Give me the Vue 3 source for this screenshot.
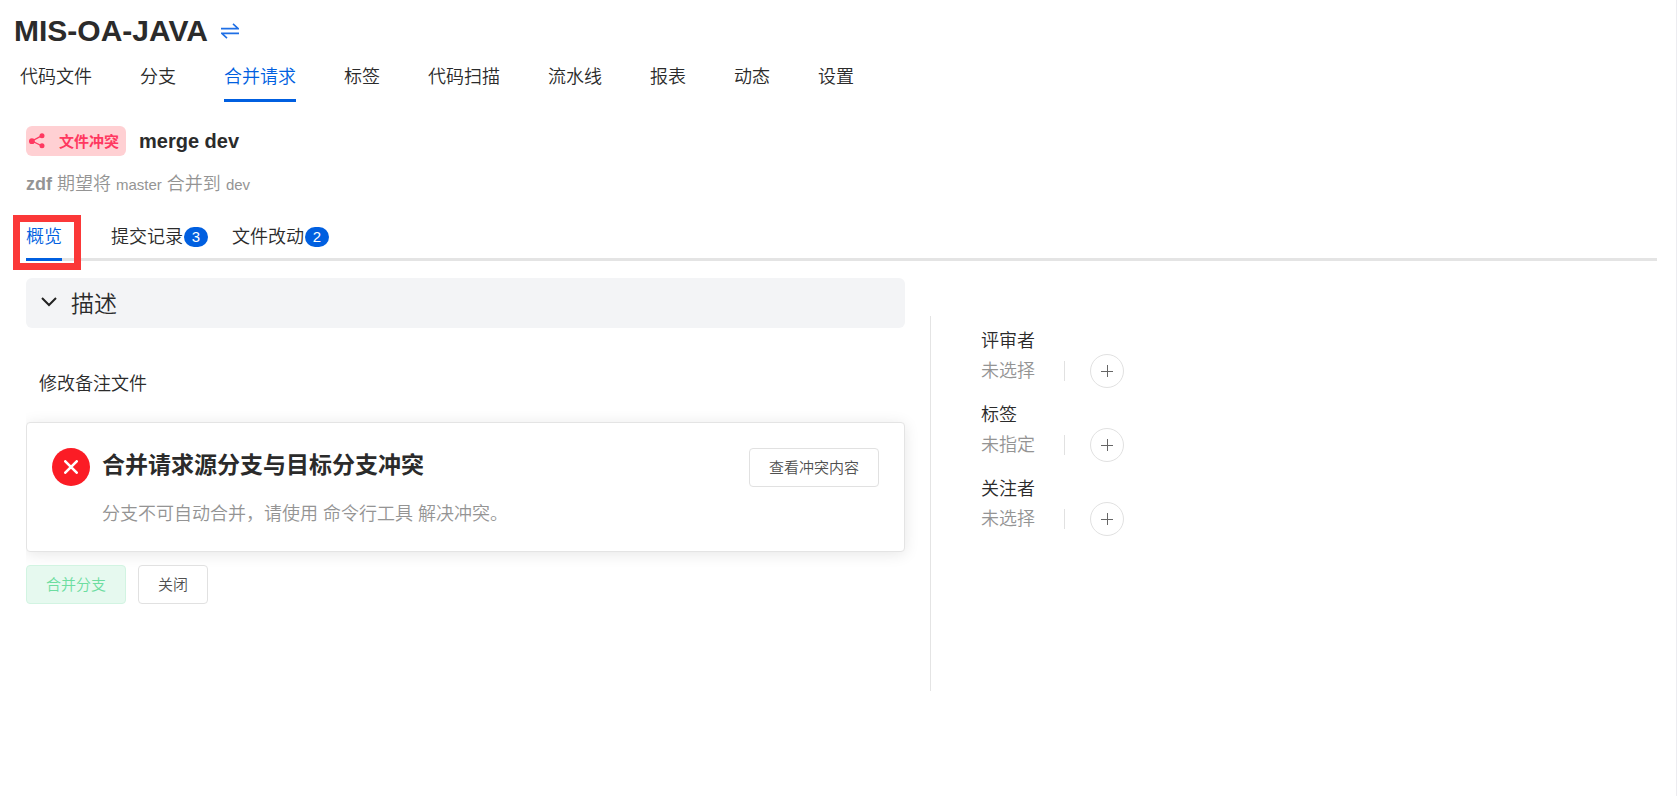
<template>
  <div class="repo-page">
    <header class="repo-header">
      <h1 class="repo-name">MIS-OA-JAVA</h1>
      <button class="switch-btn" type="button" aria-label="切换">
        <svg width="18" height="16" viewBox="0 0 18 16" fill="none" stroke="#1f6fe5" stroke-width="1.6">
          <path d="M0 5.6h17.2L12 .9" />
          <path d="M18 10.4H.8L6 15.1" />
        </svg>
      </button>
    </header>

    <nav class="repo-nav">
      <a
        v-for="item in navs"
        :key="item"
        href="#"
        class="nav-item"
        :class="{ active: item === activeNav }"
        @click.prevent="activeNav = item"
        >{{ item }}</a
      >
    </nav>

    <main class="merge-request">
      <div class="mr-title">
        <span class="conflict-tag">
          <svg width="16" height="16" viewBox="0 0 16 16" fill="#ff3860">
            <path d="M13 2.6L3 8l10 5" fill="none" stroke="#ff3860" stroke-width="1.3" />
            <circle cx="13" cy="2.7" r="2.5" />
            <circle cx="2.9" cy="8.2" r="2.9" />
            <circle cx="13" cy="12.8" r="2.5" />
          </svg>
          <span>文件冲突</span>
        </span>
        <h2>merge dev</h2>
      </div>
      <p class="mr-info"><strong>zdf</strong> 期望将 <small>master</small> 合并到 <small>dev</small></p>

      <div class="mr-tabs">
        <a
          v-for="tab in tabs"
          :key="tab.name"
          href="#"
          class="tab-item"
          :class="{ active: tab.name === activeTab }"
          @click.prevent="activeTab = tab.name"
          >{{ tab.name }}<span v-if="tab.count" class="badge">{{ tab.count }}</span></a
        >
        <div class="mark"></div>
      </div>

      <div class="mr-body">
        <section class="mr-content">
          <button class="desc-header" type="button" @click="showDesc = !showDesc">
            <svg width="16" height="10" viewBox="0 0 16 10" fill="none" stroke="#222" stroke-width="2">
              <path d="M1 1l7 7 7-7" />
            </svg>
            描述
          </button>
          <p v-show="showDesc" class="desc-text">修改备注文件</p>

          <div class="conflict-card">
            <span class="error-icon">
              <svg width="14" height="14" viewBox="0 0 14 14" fill="none" stroke="#fff" stroke-width="2.6" stroke-linecap="round">
                <path d="M1.3 1.3l11.4 11.4M12.7 1.3L1.3 12.7" />
              </svg>
            </span>
            <div class="card-text">
              <h3>合并请求源分支与目标分支冲突</h3>
              <p>分支不可自动合并，请使用 命令行工具 解决冲突。</p>
            </div>
            <button class="btn" type="button">查看冲突内容</button>
          </div>

          <div class="actions">
            <button class="btn btn-merge" type="button" disabled>合并分支</button>
            <button class="btn" type="button">关闭</button>
          </div>
        </section>

        <aside class="mr-side">
          <div v-for="item in sides" :key="item.label" class="side-item">
            <div class="side-label">{{ item.label }}</div>
            <div class="side-value">
              <span>{{ item.value }}</span>
              <i class="divider"></i>
              <button class="add-btn" type="button" :aria-label="item.label">
                <svg width="12" height="12" viewBox="0 0 12 12" stroke="#666" stroke-width="1">
                  <path d="M0 6.5h12M6.5 0v12" />
                </svg>
              </button>
            </div>
          </div>
        </aside>
      </div>
    </main>
  </div>
</template>

<script setup>
import { ref } from "vue";

const navs = ["代码文件", "分支", "合并请求", "标签", "代码扫描", "流水线", "报表", "动态", "设置"];
const activeNav = ref("合并请求");

const tabs = [
  { name: "概览" },
  { name: "提交记录", count: 3 },
  { name: "文件改动", count: 2 },
];
const activeTab = ref("概览");

const showDesc = ref(true);

const sides = [
  { label: "评审者", value: "未选择" },
  { label: "标签", value: "未指定" },
  { label: "关注者", value: "未选择" },
];
</script>

<style>
body {
  margin: 0;
  background: #fff;
}
</style>

<style scoped>
.repo-page {
  box-sizing: border-box;
  min-height: 100vh;
  border-right: 1px solid #ececf0;
  font-family: "Liberation Sans", "Noto Sans CJK SC", sans-serif;
  font-size: 18px;
  font-weight: 350;
  line-height: 24px;
  color: #2b2b2b;
}

h1,
h2,
h3,
p {
  margin: 0;
}

strong {
  font-weight: bold;
}

a {
  color: inherit;
  text-decoration: none;
}

button {
  font-family: inherit;
  font-weight: inherit;
  cursor: pointer;
}

svg {
  display: block;
}

.repo-header {
  display: flex;
  align-items: center;
  gap: 13px;
  padding: 12px 0 0 14px;
}

.repo-name {
  font-size: 30px;
  line-height: 38px;
}

.switch-btn {
  padding: 0;
  border: none;
  background: none;
}

.repo-nav {
  display: flex;
  gap: 48px;
  padding: 15px 20px 0;
}

.nav-item {
  padding-bottom: 10px;
  border-bottom: 3px solid transparent;
}

.nav-item.active {
  color: #005fe0;
  border-color: #005fe0;
}

.merge-request {
  padding: 24px 19px 24px 26px;
}

.mr-title {
  display: flex;
  align-items: center;
  gap: 13px;
}

.mr-title h2 {
  font-size: 20px;
}

.conflict-tag {
  display: flex;
  align-items: center;
  gap: 14px;
  height: 30px;
  padding: 0 7px 0 3px;
  border-radius: 6px;
  background: #ffd0d3;
  color: #ff3860;
  font-size: 15px;
  font-weight: bold;
}

.conflict-tag span {
  padding-top: 2px;
}

.mr-info {
  margin-top: 16px;
  color: #949494;
}

.mr-info small {
  font-size: 15px;
}

.mr-tabs {
  position: relative;
  display: flex;
  align-items: flex-start;
  gap: 24px;
  margin-top: 28px;
  border-bottom: 3px solid #e4e4e4;
}

.tab-item {
  display: flex;
  align-items: center;
  padding-bottom: 9px;
  margin-bottom: -3px;
  border-bottom: 3px solid transparent;
}

.tab-item.active {
  margin-right: 25px;
  border-color: #005fe0;
  color: #005fe0;
}

.badge {
  min-width: 24px;
  margin-left: 1px;
  border-radius: 10px;
  background: #005fe0;
  color: #fff;
  font-size: 15px;
  line-height: 20px;
  text-align: center;
}

/* red frame over the overview tab */
.mark {
  position: absolute;
  top: -10px;
  left: -13px;
  width: 54px;
  height: 41px;
  border: 7px solid #fb3838;
}

.mr-body {
  display: grid;
  grid-template-columns: 5fr 4fr;
}

.mr-content {
  overflow: hidden;
  padding: 17px 27px 24px 0;
}

.desc-header {
  display: flex;
  align-items: center;
  gap: 14px;
  width: 100%;
  height: 50px;
  padding: 0 15px 3px;
  border: none;
  border-radius: 6px;
  background: #f3f4f6;
  color: #2b2b2b;
  font-size: 23px;
}

.desc-text {
  padding: 44px 13px 26px;
}

.conflict-card {
  display: flex;
  align-items: flex-start;
  padding: 25px;
  border: 1px solid #e4e4e4;
  border-radius: 4px;
  background: #fff;
  box-shadow: 0 2px 15px rgba(0, 0, 0, 0.1);
}

.error-icon {
  display: flex;
  align-items: center;
  justify-content: center;
  width: 38px;
  height: 38px;
  border-radius: 50%;
  background: #fb1c25;
}

.card-text {
  flex: 1;
  margin-left: 12px;
}

.card-text h3 {
  font-size: 23px;
  line-height: 34px;
}

.card-text p {
  margin: 20px 0 0;
  color: #949494;
}

.btn {
  height: 39px;
  padding: 0 19px 2px;
  border: 1px solid #e1e1e1;
  border-radius: 4px;
  background: #fff;
  color: #505050;
  font-size: 15px;
}

.btn-merge {
  border-color: #d2f4e2;
  background: #e6f9ef;
  color: #6cdda0;
}

.actions {
  display: flex;
  gap: 12px;
  margin-top: 13px;
}

.mr-side {
  align-self: start;
  box-sizing: border-box;
  height: 375px;
  margin-top: 55px;
  margin-left: -2px;
  padding: 12px 0 0 50px;
  border-left: 1px solid #e4e4e4;
}

.side-item {
  margin-bottom: 14px;
}

.side-label {
  line-height: 26px;
}

.side-value {
  display: flex;
  align-items: center;
  color: #949494;
}

.divider {
  width: 1px;
  height: 20px;
  margin: 0 25px 0 29px;
  background: #e1e1e1;
}

.add-btn {
  display: flex;
  align-items: center;
  justify-content: center;
  width: 34px;
  height: 34px;
  padding: 0;
  border: 1px solid #e1e1e1;
  border-radius: 50%;
  background: #fff;
}
</style>
